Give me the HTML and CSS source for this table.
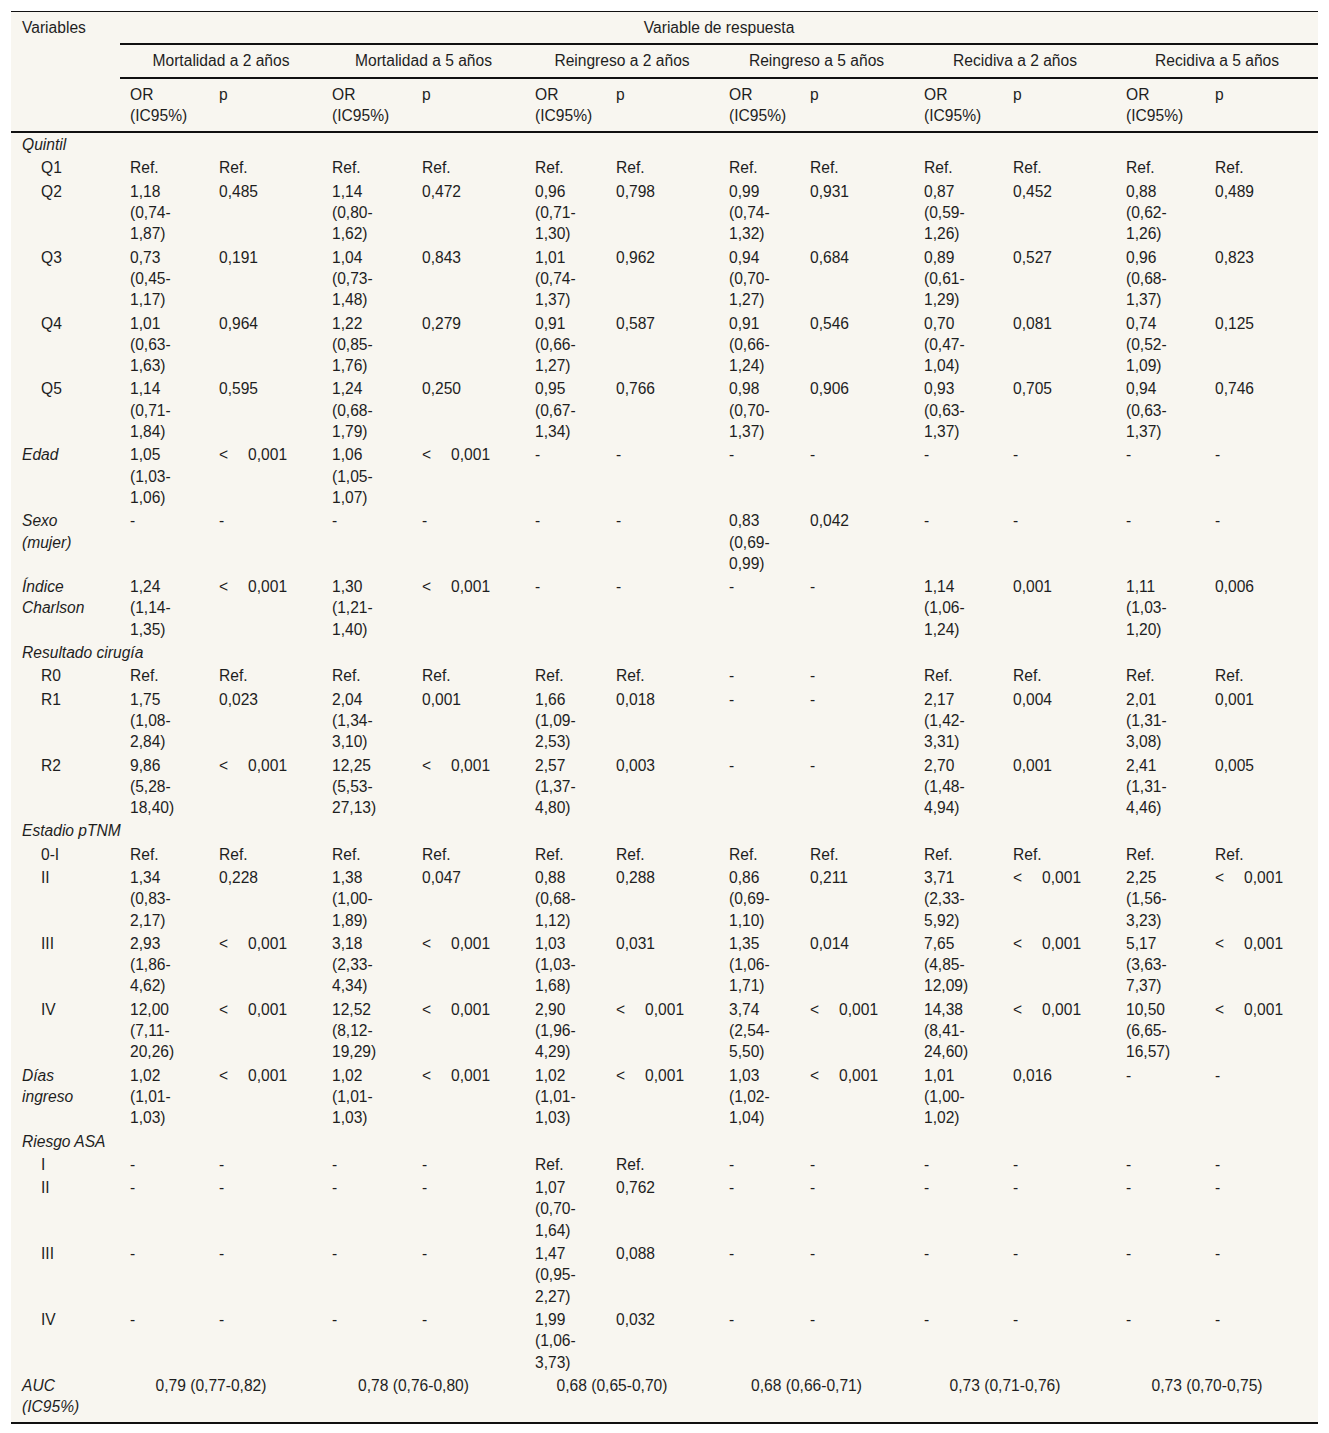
FILE: index.html
```html
<!DOCTYPE html>
<html lang="es">
<head>
<meta charset="utf-8">
<title>Tabla</title>
<link rel="stylesheet" href="styles.css">
</head>
<body>
<table class="tbl">
<colgroup>
<col class="c-var">
<col class="c-or89"><col class="c-p113">
<col class="c-or90"><col class="c-p113">
<col class="c-or81"><col class="c-p113">
<col class="c-or81"><col class="c-p114">
<col class="c-or89"><col class="c-p113">
<col class="c-or89"><col class="c-p113">
</colgroup>
<thead>
<tr class="h1">
<th class="hv" rowspan="3">Variables</th>
<th class="hc" colspan="12">Variable de respuesta</th>
</tr>
<tr class="h2">
<th class="hc" colspan="2">Mortalidad a 2 años</th>
<th class="hc" colspan="2">Mortalidad a 5 años</th>
<th class="hc" colspan="2">Reingreso a 2 años</th>
<th class="hc" colspan="2">Reingreso a 5 años</th>
<th class="hc" colspan="2">Recidiva a 2 años</th>
<th class="hc" colspan="2">Recidiva a 5 años</th>
</tr>
<tr class="h3">
<th>OR<br>(IC95%)</th><th>p</th>
<th>OR<br>(IC95%)</th><th>p</th>
<th>OR<br>(IC95%)</th><th>p</th>
<th>OR<br>(IC95%)</th><th>p</th>
<th>OR<br>(IC95%)</th><th>p</th>
<th>OR<br>(IC95%)</th><th>p</th>
</tr>
</thead>
<tbody>
<tr><td class="sec" colspan="13">Quintil</td></tr>
<tr><td class="sub">Q1</td><td>Ref.</td><td>Ref.</td><td>Ref.</td><td>Ref.</td><td>Ref.</td><td>Ref.</td><td>Ref.</td><td>Ref.</td><td>Ref.</td><td>Ref.</td><td>Ref.</td><td>Ref.</td></tr>
<tr><td class="sub">Q2</td><td>1,18<br>(0,74-<br>1,87)</td><td>0,485</td><td>1,14<br>(0,80-<br>1,62)</td><td>0,472</td><td>0,96<br>(0,71-<br>1,30)</td><td>0,798</td><td>0,99<br>(0,74-<br>1,32)</td><td>0,931</td><td>0,87<br>(0,59-<br>1,26)</td><td>0,452</td><td>0,88<br>(0,62-<br>1,26)</td><td>0,489</td></tr>
<tr><td class="sub">Q3</td><td>0,73<br>(0,45-<br>1,17)</td><td>0,191</td><td>1,04<br>(0,73-<br>1,48)</td><td>0,843</td><td>1,01<br>(0,74-<br>1,37)</td><td>0,962</td><td>0,94<br>(0,70-<br>1,27)</td><td>0,684</td><td>0,89<br>(0,61-<br>1,29)</td><td>0,527</td><td>0,96<br>(0,68-<br>1,37)</td><td>0,823</td></tr>
<tr><td class="sub">Q4</td><td>1,01<br>(0,63-<br>1,63)</td><td>0,964</td><td>1,22<br>(0,85-<br>1,76)</td><td>0,279</td><td>0,91<br>(0,66-<br>1,27)</td><td>0,587</td><td>0,91<br>(0,66-<br>1,24)</td><td>0,546</td><td>0,70<br>(0,47-<br>1,04)</td><td>0,081</td><td>0,74<br>(0,52-<br>1,09)</td><td>0,125</td></tr>
<tr><td class="sub">Q5</td><td>1,14<br>(0,71-<br>1,84)</td><td>0,595</td><td>1,24<br>(0,68-<br>1,79)</td><td>0,250</td><td>0,95<br>(0,67-<br>1,34)</td><td>0,766</td><td>0,98<br>(0,70-<br>1,37)</td><td>0,906</td><td>0,93<br>(0,63-<br>1,37)</td><td>0,705</td><td>0,94<br>(0,63-<br>1,37)</td><td>0,746</td></tr>
<tr><td class="lab">Edad</td><td>1,05<br>(1,03-<br>1,06)</td><td class="lt">&lt;&emsp;&nbsp;0,001</td><td>1,06<br>(1,05-<br>1,07)</td><td class="lt">&lt;&emsp;&nbsp;0,001</td><td>-</td><td>-</td><td>-</td><td>-</td><td>-</td><td>-</td><td>-</td><td>-</td></tr>
<tr><td class="lab">Sexo<br>(mujer)</td><td>-</td><td>-</td><td>-</td><td>-</td><td>-</td><td>-</td><td>0,83<br>(0,69-<br>0,99)</td><td>0,042</td><td>-</td><td>-</td><td>-</td><td>-</td></tr>
<tr><td class="lab">Índice<br>Charlson</td><td>1,24<br>(1,14-<br>1,35)</td><td class="lt">&lt;&emsp;&nbsp;0,001</td><td>1,30<br>(1,21-<br>1,40)</td><td class="lt">&lt;&emsp;&nbsp;0,001</td><td>-</td><td>-</td><td>-</td><td>-</td><td>1,14<br>(1,06-<br>1,24)</td><td>0,001</td><td>1,11<br>(1,03-<br>1,20)</td><td>0,006</td></tr>
<tr><td class="sec" colspan="13">Resultado cirugía</td></tr>
<tr><td class="sub">R0</td><td>Ref.</td><td>Ref.</td><td>Ref.</td><td>Ref.</td><td>Ref.</td><td>Ref.</td><td>-</td><td>-</td><td>Ref.</td><td>Ref.</td><td>Ref.</td><td>Ref.</td></tr>
<tr><td class="sub">R1</td><td>1,75<br>(1,08-<br>2,84)</td><td>0,023</td><td>2,04<br>(1,34-<br>3,10)</td><td>0,001</td><td>1,66<br>(1,09-<br>2,53)</td><td>0,018</td><td>-</td><td>-</td><td>2,17<br>(1,42-<br>3,31)</td><td>0,004</td><td>2,01<br>(1,31-<br>3,08)</td><td>0,001</td></tr>
<tr><td class="sub">R2</td><td>9,86<br>(5,28-<br>18,40)</td><td class="lt">&lt;&emsp;&nbsp;0,001</td><td>12,25<br>(5,53-<br>27,13)</td><td class="lt">&lt;&emsp;&nbsp;0,001</td><td>2,57<br>(1,37-<br>4,80)</td><td>0,003</td><td>-</td><td>-</td><td>2,70<br>(1,48-<br>4,94)</td><td>0,001</td><td>2,41<br>(1,31-<br>4,46)</td><td>0,005</td></tr>
<tr><td class="sec" colspan="13">Estadio pTNM</td></tr>
<tr><td class="sub">0-I</td><td>Ref.</td><td>Ref.</td><td>Ref.</td><td>Ref.</td><td>Ref.</td><td>Ref.</td><td>Ref.</td><td>Ref.</td><td>Ref.</td><td>Ref.</td><td>Ref.</td><td>Ref.</td></tr>
<tr><td class="sub">II</td><td>1,34<br>(0,83-<br>2,17)</td><td>0,228</td><td>1,38<br>(1,00-<br>1,89)</td><td>0,047</td><td>0,88<br>(0,68-<br>1,12)</td><td>0,288</td><td>0,86<br>(0,69-<br>1,10)</td><td>0,211</td><td>3,71<br>(2,33-<br>5,92)</td><td class="lt">&lt;&emsp;&nbsp;0,001</td><td>2,25<br>(1,56-<br>3,23)</td><td class="lt">&lt;&emsp;&nbsp;0,001</td></tr>
<tr><td class="sub">III</td><td>2,93<br>(1,86-<br>4,62)</td><td class="lt">&lt;&emsp;&nbsp;0,001</td><td>3,18<br>(2,33-<br>4,34)</td><td class="lt">&lt;&emsp;&nbsp;0,001</td><td>1,03<br>(1,03-<br>1,68)</td><td>0,031</td><td>1,35<br>(1,06-<br>1,71)</td><td>0,014</td><td>7,65<br>(4,85-<br>12,09)</td><td class="lt">&lt;&emsp;&nbsp;0,001</td><td>5,17<br>(3,63-<br>7,37)</td><td class="lt">&lt;&emsp;&nbsp;0,001</td></tr>
<tr><td class="sub">IV</td><td>12,00<br>(7,11-<br>20,26)</td><td class="lt">&lt;&emsp;&nbsp;0,001</td><td>12,52<br>(8,12-<br>19,29)</td><td class="lt">&lt;&emsp;&nbsp;0,001</td><td>2,90<br>(1,96-<br>4,29)</td><td class="lt">&lt;&emsp;&nbsp;0,001</td><td>3,74<br>(2,54-<br>5,50)</td><td class="lt">&lt;&emsp;&nbsp;0,001</td><td>14,38<br>(8,41-<br>24,60)</td><td class="lt">&lt;&emsp;&nbsp;0,001</td><td>10,50<br>(6,65-<br>16,57)</td><td class="lt">&lt;&emsp;&nbsp;0,001</td></tr>
<tr><td class="lab">Días<br>ingreso</td><td>1,02<br>(1,01-<br>1,03)</td><td class="lt">&lt;&emsp;&nbsp;0,001</td><td>1,02<br>(1,01-<br>1,03)</td><td class="lt">&lt;&emsp;&nbsp;0,001</td><td>1,02<br>(1,01-<br>1,03)</td><td class="lt">&lt;&emsp;&nbsp;0,001</td><td>1,03<br>(1,02-<br>1,04)</td><td class="lt">&lt;&emsp;&nbsp;0,001</td><td>1,01<br>(1,00-<br>1,02)</td><td>0,016</td><td>-</td><td>-</td></tr>
<tr><td class="sec" colspan="13">Riesgo ASA</td></tr>
<tr><td class="sub">I</td><td>-</td><td>-</td><td>-</td><td>-</td><td>Ref.</td><td>Ref.</td><td>-</td><td>-</td><td>-</td><td>-</td><td>-</td><td>-</td></tr>
<tr><td class="sub">II</td><td>-</td><td>-</td><td>-</td><td>-</td><td>1,07<br>(0,70-<br>1,64)</td><td>0,762</td><td>-</td><td>-</td><td>-</td><td>-</td><td>-</td><td>-</td></tr>
<tr><td class="sub">III</td><td>-</td><td>-</td><td>-</td><td>-</td><td>1,47<br>(0,95-<br>2,27)</td><td>0,088</td><td>-</td><td>-</td><td>-</td><td>-</td><td>-</td><td>-</td></tr>
<tr><td class="sub">IV</td><td>-</td><td>-</td><td>-</td><td>-</td><td>1,99<br>(1,06-<br>3,73)</td><td>0,032</td><td>-</td><td>-</td><td>-</td><td>-</td><td>-</td><td>-</td></tr>
<tr class="auc"><td class="lab">AUC<br>(IC95%)</td><td class="ac" colspan="2">0,79 (0,77-0,82)</td><td class="ac" colspan="2">0,78 (0,76-0,80)</td><td class="ac" colspan="2">0,68 (0,65-0,70)</td><td class="ac" colspan="2">0,68 (0,66-0,71)</td><td class="ac" colspan="2">0,73 (0,71-0,76)</td><td class="ac" colspan="2">0,73 (0,70-0,75)</td></tr>
</tbody>
</table>
</body>
</html>
```
FILE: styles.css
```css
html, body {
  background: #ffffff;
}
body {
  margin: 11px;
  font-family: "Liberation Sans", Arial, Helvetica, sans-serif;
  font-size: 15.6px;
  line-height: 21.3px;
  color: #1e1e1e;
}
.tbl {
  width: 1307px;
  table-layout: fixed;
  border-collapse: collapse;
  background: #f8f6f0;
  border-top: 1px solid #111;
  border-bottom: 2px solid #111;
}
.c-var { width: 109px; }
.c-or89 { width: 89px; }
.c-or90 { width: 90px; }
.c-or81 { width: 81px; }
.c-p113 { width: 113px; }
.c-p114 { width: 114px; }

th, td {
  text-align: left;
  vertical-align: top;
  font-weight: normal;
  padding: 1px 4px 1px 10px;
}
thead th {
  padding-top: 5px;
  padding-bottom: 5px;
}
.hv {
  padding-left: 11px;
  border-bottom: 2px solid #111;
}
.hc {
  text-align: center;
  padding-left: 4px;
  padding-right: 4px;
}
.h1 .hc, .h2 .hc {
  border-bottom: 2px solid #111;
}
.h3 th {
  border-bottom: 2px solid #111;
}
.sec {
  font-style: italic;
  padding-left: 11px;
}
.lab {
  font-style: italic;
  padding-left: 11px;
}
.sub {
  padding-left: 30px;
}
.lt {
  white-space: nowrap;
}
.ac {
  text-align: center;
  padding-left: 0;
  padding-right: 20px;
}
.auc td {
  padding-bottom: 5px;
}
```
